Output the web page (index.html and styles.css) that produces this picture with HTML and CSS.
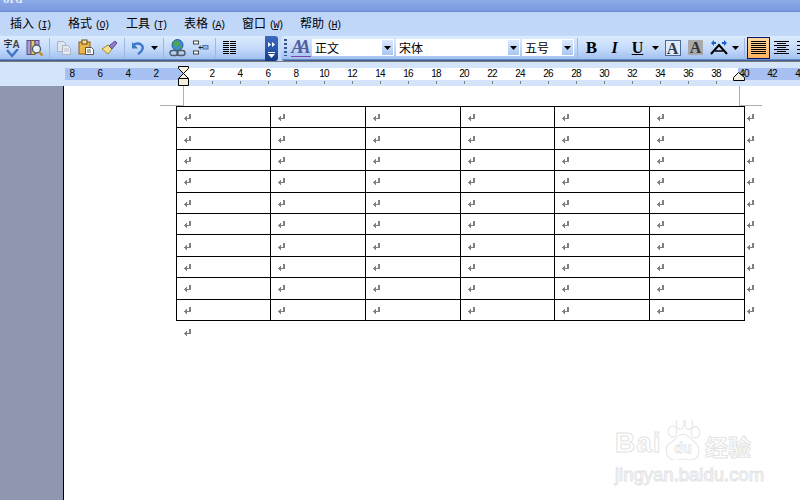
FILE: index.html
```html
<!DOCTYPE html>
<html lang="zh">
<head>
<meta charset="utf-8">
<title>Word</title>
<link rel="stylesheet" href="styles.css">
</head>
<body>
<svg class="defs" width="0" height="0" aria-hidden="true">
  <symbol id="ret" viewBox="0 0 8 8">
    <path d="M5 0h2v5H3V4h2z" fill="#808080"/>
    <path d="M3 2v5h-1v-1h-1v-1h-1v-1h1v-1h1v-1z" fill="#808080"/>
  </symbol>
  <symbol id="drop" viewBox="0 0 7 4"><path d="M0 0h7L3.500 4z" fill="#000"/></symbol>
</svg>

<header class="title"><span class="title-text">ord</span></header>

<nav class="menu">
  <span class="menu-item">插入<span class="key">(<u>I</u>)</span></span>
  <span class="menu-item">格式<span class="key">(<u>O</u>)</span></span>
  <span class="menu-item">工具<span class="key">(<u>T</u>)</span></span>
  <span class="menu-item">表格<span class="key">(<u>A</u>)</span></span>
  <span class="menu-item">窗口<span class="key">(<u>W</u>)</span></span>
  <span class="menu-item">帮助<span class="key">(<u>H</u>)</span></span>
</nav>

<div class="toolbar">
  <div class="band band-left">
    <span class="btn spell"><span class="spell-text"><span class="spell-zi">字</span><span class="spell-a">A</span></span>
      <svg class="spell-check" width="16" height="9" viewBox="0 0 16 9"><path d="M3 1l5 6 6-7" fill="none" stroke="#3f74c8" stroke-width="2.400"/></svg></span>
    <span class="btn"><svg width="17" height="18" viewBox="0 0 17 18">
      <rect x="1" y="1.500" width="4" height="14" fill="#a89bd8" stroke="#5a4f8c"/><rect x="5" y="1.500" width="4" height="14" fill="#e3c878" stroke="#6e5c2e"/><rect x="9" y="1.500" width="4" height="6" fill="#a89bd8" stroke="#5a4f8c"/>
      <circle cx="10.500" cy="10" r="4" fill="#eaf3fb" stroke="#4d5d6c" stroke-width="1.400"/><path d="M13 13l3.500 3.500" stroke="#c98a1c" stroke-width="2.400"/></svg></span>
    <span class="sep"></span>
    <span class="btn"><svg width="16" height="16" viewBox="0 0 16 16">
      <path d="M1.500 1.500h6l2 2v8h-8z" fill="#dfe6ee" stroke="#a7b2c2"/><path d="M6.500 5.500h5l3 3v6h-8z" fill="#e6ebf2" stroke="#a7b2c2"/><path d="M8 9h5M8 11h5" stroke="#b7c1cf"/></svg></span>
    <span class="btn"><svg width="17" height="17" viewBox="0 0 17 17">
      <rect x="1" y="3" width="11" height="12" fill="#e8b84a" stroke="#8b5e16"/><rect x="4" y="1" width="5" height="4" fill="#f4e3a0" stroke="#6c4a12"/>
      <path d="M7.500 8.500h6l2 2v5h-8z" fill="#fff" stroke="#555"/><path d="M9 11h4M9 13h4" stroke="#666"/></svg></span>
    <span class="btn"><svg width="17" height="15" viewBox="0 0 17 15">
      <path d="M1 9l6-4 4 4-4 5z" fill="#f3e08c" stroke="#a78a30"/><path d="M8 6l6-5 2 2-5 6z" fill="#8d7cc8" stroke="#594c94"/></svg></span>
    <span class="sep"></span>
    <span class="btn btn-undo"><svg width="14" height="14" viewBox="0 0 14 14">
      <path d="M3 3.500c6-2.500 9.500 1 8.500 4.500-.7 2.500-2.500 4-4.500 5" fill="none" stroke="#3f78c9" stroke-width="2.500"/><path d="M1 1v6.500h6z" fill="#3f78c9"/></svg></span>
    <span class="dd"><svg width="7" height="4"><use href="#drop"/></svg></span>
    <span class="sep"></span>
    <span class="btn"><svg width="17" height="18" viewBox="0 0 17 18">
      <circle cx="8.500" cy="6" r="5.500" fill="#3b8fd0" stroke="#2a5f96"/><path d="M5 2l4 0 2 3-3 3-3-2zM11 7l2 1-2 2z" fill="#4fa64a"/>
      <rect x="1" y="11.500" width="8" height="5" rx="2.500" fill="none" stroke="#505a68" stroke-width="1.400"/><rect x="8" y="11.500" width="8" height="5" rx="2.500" fill="none" stroke="#505a68" stroke-width="1.400"/></svg></span>
    <span class="btn"><svg width="17" height="15" viewBox="0 0 17 15">
      <rect x="1.500" y="1" width="5" height="3" fill="#fff" stroke="#444"/><rect x="1.500" y="11" width="5" height="3" fill="#fff" stroke="#444"/><rect x="11" y="5.500" width="5" height="3.500" fill="#8db8ea" stroke="#4a76b0"/>
      <path d="M7 7.500h4M9 5.500l-2 2 2 2" fill="none" stroke="#222"/></svg></span>
    <span class="sep"></span>
    <span class="btn"><svg width="13" height="13" viewBox="0 0 13 13">
      <path d="M0 .5h6M0 2.500h6M0 4.500h6M0 6.500h6M0 8.500h6M0 10.500h6M0 12.500h6M7 .5h6M7 2.500h6M7 4.500h6M7 6.500h6M7 8.500h6M7 10.500h6M7 12.500h6" stroke="#000"/></svg></span>
  </div>
  <div class="chevron">
    <svg width="7" height="5" viewBox="0 0 7 5"><path d="M0 0l3 2.500L0 5zM4 0l3 2.500L4 5z" fill="#fff"/></svg>
    <svg width="7" height="6" viewBox="0 0 7 6"><path d="M0 0h7v1H0zM0 2h7L3.500 6z" fill="#fff"/></svg>
  </div>
  <div class="band band-right">
    <span class="grip"></span>
    <span class="style-btn"><span class="style-a">AA</span></span>
    <span class="combo combo-style"><span class="combo-text">正文</span><span class="arrow"><svg width="7" height="4"><use href="#drop"/></svg></span></span>
    <span class="combo combo-font"><span class="combo-text">宋体</span><span class="arrow"><svg width="7" height="4"><use href="#drop"/></svg></span></span>
    <span class="combo combo-size"><span class="combo-text">五号</span><span class="arrow"><svg width="7" height="4"><use href="#drop"/></svg></span></span>
    <span class="sep"></span>
    <span class="btn fmt fmt-b">B</span>
    <span class="btn fmt fmt-i">I</span>
    <span class="btn fmt fmt-u">U</span>
    <span class="dd"><svg width="7" height="4"><use href="#drop"/></svg></span>
    <span class="btn"><span class="fmt-box">A</span></span>
    <span class="btn"><span class="fmt-shade">A</span></span>
    <span class="btn"><svg width="18" height="15" viewBox="0 0 18 15">
      <path d="M1 14L9 5l8 9" fill="none" stroke="#000" stroke-width="2"/><path d="M5 11h8" stroke="#000" stroke-width="1.500"/>
      <path d="M1 3l3-3v2h2v2H4v2z" fill="#1c5fd0"/><path d="M17 3l-3-3v2h-2v2h2v2z" fill="#1c5fd0"/></svg></span>
    <span class="dd dd-narrow"><svg width="7" height="4"><use href="#drop"/></svg></span>
    <span class="sep"></span>
    <span class="btn align active"><svg width="15" height="13" viewBox="0 0 15 13"><path d="M0 .5h15M0 2.500h15M0 4.500h15M0 6.500h15M0 8.500h15M0 10.500h15M0 12.500h15" stroke="#000"/></svg></span>
    <span class="btn align"><svg width="15" height="13" viewBox="0 0 15 13"><path d="M0 .5h15M3 2.500h9M0 4.500h15M3 6.500h9M0 8.500h15M3 10.500h9M0 12.500h15" stroke="#000"/></svg></span>
    <span class="btn align"><svg width="15" height="13" viewBox="0 0 15 13"><path d="M0 .5h15M6 2.500h9M0 4.500h15M6 6.500h9M0 8.500h15M6 10.500h9M0 12.500h15" stroke="#000"/></svg></span>
  </div>
</div>

<div class="ruler">
  <div class="ruler-scale">
    <span class="num">8</span><span class="num">6</span><span class="num">4</span><span class="num">2</span><span class="num"></span>
    <span class="num">2</span><span class="num">4</span><span class="num">6</span><span class="num">8</span><span class="num">10</span>
    <span class="num">12</span><span class="num">14</span><span class="num">16</span><span class="num">18</span><span class="num">20</span>
    <span class="num">22</span><span class="num">24</span><span class="num">26</span><span class="num">28</span><span class="num">30</span>
    <span class="num">32</span><span class="num">34</span><span class="num">36</span><span class="num">38</span><span class="num">40</span>
    <span class="num">42</span><span class="num">44</span>
  </div>
  <div class="ruler-ticks"></div>
  <svg class="marker-left" width="11" height="20" viewBox="0 0 11 20">
    <path d="M.5 .5h10v2L5.500 7.500l5 5v7H.5v-7l5-5-5-5z" fill="#f3efdf" stroke="#000"/><path d="M.5 12.500h10" stroke="#000"/></svg>
  <svg class="marker-right" width="12" height="9" viewBox="0 0 12 9">
    <path d="M.5 8.500v-3l5-5 6 5v3z" fill="#f3efdf" stroke="#000"/></svg>
</div>

<main class="workspace">
  <aside class="side"></aside>
  <section class="doc">
    <span class="crop crop-lv"></span><span class="crop crop-lh"></span>
    <span class="crop crop-rv"></span><span class="crop crop-rh"></span>
    <table class="grid">
      <tbody>
        <tr><td><svg class="ret"><use href="#ret"/></svg></td><td><svg class="ret"><use href="#ret"/></svg></td><td><svg class="ret"><use href="#ret"/></svg></td><td><svg class="ret"><use href="#ret"/></svg></td><td><svg class="ret"><use href="#ret"/></svg></td><td><svg class="ret"><use href="#ret"/></svg></td><td class="end"><svg class="ret"><use href="#ret"/></svg></td></tr>
        <tr><td><svg class="ret"><use href="#ret"/></svg></td><td><svg class="ret"><use href="#ret"/></svg></td><td><svg class="ret"><use href="#ret"/></svg></td><td><svg class="ret"><use href="#ret"/></svg></td><td><svg class="ret"><use href="#ret"/></svg></td><td><svg class="ret"><use href="#ret"/></svg></td><td class="end"><svg class="ret"><use href="#ret"/></svg></td></tr>
        <tr><td><svg class="ret"><use href="#ret"/></svg></td><td><svg class="ret"><use href="#ret"/></svg></td><td><svg class="ret"><use href="#ret"/></svg></td><td><svg class="ret"><use href="#ret"/></svg></td><td><svg class="ret"><use href="#ret"/></svg></td><td><svg class="ret"><use href="#ret"/></svg></td><td class="end"><svg class="ret"><use href="#ret"/></svg></td></tr>
        <tr><td><svg class="ret"><use href="#ret"/></svg></td><td><svg class="ret"><use href="#ret"/></svg></td><td><svg class="ret"><use href="#ret"/></svg></td><td><svg class="ret"><use href="#ret"/></svg></td><td><svg class="ret"><use href="#ret"/></svg></td><td><svg class="ret"><use href="#ret"/></svg></td><td class="end"><svg class="ret"><use href="#ret"/></svg></td></tr>
        <tr><td><svg class="ret"><use href="#ret"/></svg></td><td><svg class="ret"><use href="#ret"/></svg></td><td><svg class="ret"><use href="#ret"/></svg></td><td><svg class="ret"><use href="#ret"/></svg></td><td><svg class="ret"><use href="#ret"/></svg></td><td><svg class="ret"><use href="#ret"/></svg></td><td class="end"><svg class="ret"><use href="#ret"/></svg></td></tr>
        <tr><td><svg class="ret"><use href="#ret"/></svg></td><td><svg class="ret"><use href="#ret"/></svg></td><td><svg class="ret"><use href="#ret"/></svg></td><td><svg class="ret"><use href="#ret"/></svg></td><td><svg class="ret"><use href="#ret"/></svg></td><td><svg class="ret"><use href="#ret"/></svg></td><td class="end"><svg class="ret"><use href="#ret"/></svg></td></tr>
        <tr><td><svg class="ret"><use href="#ret"/></svg></td><td><svg class="ret"><use href="#ret"/></svg></td><td><svg class="ret"><use href="#ret"/></svg></td><td><svg class="ret"><use href="#ret"/></svg></td><td><svg class="ret"><use href="#ret"/></svg></td><td><svg class="ret"><use href="#ret"/></svg></td><td class="end"><svg class="ret"><use href="#ret"/></svg></td></tr>
        <tr><td><svg class="ret"><use href="#ret"/></svg></td><td><svg class="ret"><use href="#ret"/></svg></td><td><svg class="ret"><use href="#ret"/></svg></td><td><svg class="ret"><use href="#ret"/></svg></td><td><svg class="ret"><use href="#ret"/></svg></td><td><svg class="ret"><use href="#ret"/></svg></td><td class="end"><svg class="ret"><use href="#ret"/></svg></td></tr>
        <tr><td><svg class="ret"><use href="#ret"/></svg></td><td><svg class="ret"><use href="#ret"/></svg></td><td><svg class="ret"><use href="#ret"/></svg></td><td><svg class="ret"><use href="#ret"/></svg></td><td><svg class="ret"><use href="#ret"/></svg></td><td><svg class="ret"><use href="#ret"/></svg></td><td class="end"><svg class="ret"><use href="#ret"/></svg></td></tr>
        <tr><td><svg class="ret"><use href="#ret"/></svg></td><td><svg class="ret"><use href="#ret"/></svg></td><td><svg class="ret"><use href="#ret"/></svg></td><td><svg class="ret"><use href="#ret"/></svg></td><td><svg class="ret"><use href="#ret"/></svg></td><td><svg class="ret"><use href="#ret"/></svg></td><td class="end"><svg class="ret"><use href="#ret"/></svg></td></tr>
      </tbody>
    </table>
    <div class="para"><svg class="ret"><use href="#ret"/></svg></div>
    <div class="watermark">
      <div class="wm-top">
        <span class="wm-bai">Bai</span>
        <svg class="wm-paw" width="40" height="40" viewBox="0 0 42 42">
          <g fill="#fff" stroke="#e6e6e6" stroke-width="1.200">
            <ellipse cx="10" cy="12" rx="4.500" ry="6"/><ellipse cx="18" cy="4" rx="4" ry="6"/><ellipse cx="27" cy="4" rx="4" ry="6"/><ellipse cx="34" cy="13" rx="4.500" ry="6"/>
            <path d="M21 15c6 0 9 6 13 9 5 4 6 18-6 18-3 0-5-1-7-1s-5 2-9 1C2 41 1 28 8 24c5-3 7-9 13-9z"/>
          </g>
          <text x="21" y="35" class="wm-du">du</text>
        </svg>
        <span class="wm-cn">经验</span>
      </div>
      <div class="wm-url">jingyan.baidu.com</div>
    </div>
  </section>
</main>
</body>
</html>
```

FILE: styles.css
```css
* { box-sizing: border-box; }

html, body { margin: 0; height: 100%; }

body {
  width: 800px;
  height: 500px;
  overflow: hidden;
  display: flex;
  flex-direction: column;
  background: #fff;
  font-family: "Noto Sans CJK SC", "Liberation Sans", sans-serif;
  color: #000;
}

.defs { display: block; height: 0; }

/* title bar */
.title {
  height: 12px;
  flex: none;
  overflow: hidden;
  padding-left: 3px;
  background: linear-gradient(#8cabe6, #7b98de);
  border-bottom: 1px solid #6d8cd6;
}

.title-text {
  display: block;
  margin-top: -9px;
  font: bold 13px/16px "Liberation Serif", serif;
  color: #dfe8f8;
}

/* menu */
.menu {
  height: 24px;
  flex: none;
  display: flex;
  align-items: center;
  gap: 18px;
  padding-left: 10px;
  background: linear-gradient(#bed5f8, #c3d9f9);
}

.menu-item {
  width: 40px;
  font-size: 12px;
  line-height: 16px;
  white-space: nowrap;
}

.key {
  margin-left: 3px;
  font-family: "Liberation Mono", monospace;
  font-size: 10px;
  letter-spacing: -1.500px;
}

/* toolbar */
.toolbar {
  height: 26px;
  flex: none;
  display: flex;
  background: #c3d9f9;
  border-bottom: 1px solid #7b7b7b;
}

.band {
  display: flex;
  align-items: center;
  height: 25px;
  padding-bottom: 2px;
  background: linear-gradient(#dcebfe 0%, #c4dafa 50%, #a4c2f0 90%, #3f5f9c 97%, #3f5f9c 100%);
}

.band-left { width: 265px; }

.band-right {
  flex: 1;
  min-width: 0;
  margin-left: 3px;
  padding-left: 3px;
  border-radius: 4px 0 0 4px;
  overflow: hidden;
}

.chevron {
  width: 13px;
  height: 25px;
  flex: none;
  display: flex;
  flex-direction: column;
  align-items: center;
  justify-content: space-between;
  padding: 6px 0 3px;
  background: linear-gradient(#3f68c0, #2553a8 60%, #143a85);
  border-radius: 0 3px 3px 0;
}

.btn {
  width: 23px;
  height: 22px;
  flex: none;
  display: flex;
  align-items: center;
  justify-content: center;
}

.btn-undo { width: 21px; }

.sep {
  width: 6px;
  height: 20px;
  flex: none;
  background: linear-gradient(#9fb8e0, #9fb8e0) center / 1px 100% no-repeat;
}

.dd {
  width: 12px;
  height: 22px;
  flex: none;
  display: flex;
  align-items: center;
  justify-content: center;
}

.dd-narrow { width: 11px; }

/* spell button */
.spell {
  flex-direction: column;
  justify-content: flex-start;
  padding-top: 2px;
  overflow: hidden;
}

.spell-text {
  display: flex;
  white-space: nowrap;
}

.spell-zi {
  font-size: 9px;
  line-height: 10px;
}

.spell-a {
  font: bold 10px/11px "Liberation Sans", sans-serif;
  color: #444;
}

.spell-check { margin-top: -1px; }

/* right band */
.grip {
  width: 3px;
  height: 17px;
  flex: none;
  margin-right: 4px;
  background: repeating-linear-gradient(#37588f 0 2px, transparent 2px 4px);
}

.style-btn {
  width: 20px;
  flex: none;
  display: flex;
  justify-content: center;
}

.style-a {
  font: italic bold 18px/18px "Liberation Serif", serif;
  letter-spacing: -5px;
  padding-right: 5px;
  color: #55609f;
  border-bottom: 1px solid #7a45a8;
}

.combo {
  height: 17px;
  flex: none;
  display: flex;
  margin-right: 2px;
  background: #fff;
  border: 1px solid #fff;
}

.combo-style { width: 82px; margin-left: 1px; }
.combo-font { width: 124px; }
.combo-size { width: 52px; margin-right: 0; }

.combo-text {
  flex: 1;
  padding-left: 2px;
  font-size: 12px;
  line-height: 15px;
}

.arrow {
  width: 11px;
  flex: none;
  display: flex;
  align-items: center;
  justify-content: center;
  background: linear-gradient(#dbe9fd, #a9c6f2);
}

.fmt {
  font-family: "Liberation Serif", serif;
  font-weight: bold;
  font-size: 16px;
}

.fmt-b { font-weight: 900; font-size: 17px; }
.fmt-i { font-style: italic; }
.fmt-u { text-decoration: underline; }

.fmt-box {
  width: 16px;
  height: 16px;
  text-align: center;
  font: bold 16px/15px "Liberation Serif", serif;
  color: #2b3b4b;
  border: 1px solid #4d6a96;
  background: #dfeafb;
}

.fmt-shade {
  width: 15px;
  height: 15px;
  text-align: center;
  font: bold 16px/15px "Liberation Serif", serif;
  color: #333;
  background: #a9a9a9;
}

.align.active {
  background: linear-gradient(#ffd9a0, #fdb25e);
  border: 1px solid #00146e;
}

/* ruler */
.ruler {
  height: 24px;
  flex: none;
  position: relative;
  padding-top: 6px;
  overflow: hidden;
  background: #d4e4fb;
}

.ruler-scale {
  height: 12px;
  display: flex;
  padding-left: 58px;
  background: linear-gradient(to right,
    transparent 65px, #a6c0f2 65px, #a6c0f2 183px,
    #fff 183px, #fff 738px, #a6c0f2 738px);
}

.num {
  width: 28px;
  flex: none;
  text-align: center;
  font: 10px/12px "Liberation Sans", sans-serif;
  letter-spacing: -.8px;
}

.ruler-ticks {
  width: 505px;
  height: 3px;
  margin: 1px 0 0 212px;
  background: repeating-linear-gradient(to right, #808080 0 1px, transparent 1px 28px);
}

.marker-left { position: absolute; left: 178px; top: 4px; }
.marker-right { position: absolute; left: 733px; top: 10px; }

/* workspace */
.workspace {
  flex: 1;
  min-height: 0;
  display: flex;
}

.side {
  width: 64px;
  flex: none;
  background: #8e97af;
  border-right: 1px solid #000;
}

.doc {
  flex: 1;
  position: relative;
  padding: 20px 0 0 112px;
  background: #fff;
}

.crop { position: absolute; background: #b0b0b0; }
.crop-lv { left: 119px; top: 0; width: 1px; height: 20px; }
.crop-lh { left: 96px; top: 19px; width: 24px; height: 1px; }
.crop-rv { left: 675px; top: 0; width: 1px; height: 20px; }
.crop-rh { left: 675px; top: 19px; width: 23px; height: 1px; }

.ret { display: block; width: 8px; height: 8px; }

.grid {
  border-collapse: collapse;
  table-layout: fixed;
  width: 588px;
  height: 215px;
}

.grid td {
  width: 95px;
  padding: 2px 0 0 7px;
  border: 1px solid #000;
  vertical-align: middle;
}

.grid td:nth-child(3n+1) { width: 94px; }

.grid td.end {
  width: 20px;
  padding-left: 2px;
  border: 0;
  border-left: 1px solid #000;
}

.para { padding: 8px 0 0 8px; }

/* watermark */
.watermark {
  position: absolute;
  left: 551px;
  top: 334px;
  width: 146px;
  color: #fff;
  -webkit-text-stroke: 1px #e4e4e4;
}

.wm-top {
  display: flex;
  align-items: flex-end;
  height: 40px;
}

.wm-bai {
  width: 48px;
  margin-bottom: 2px;
  font: bold 28px/30px "Liberation Sans", sans-serif;
  letter-spacing: 1px;
}

.wm-paw { flex: none; }

.wm-du {
  font: bold 15px "Liberation Sans", sans-serif;
  text-anchor: middle;
  fill: #fff;
  stroke: #e4e4e4;
  stroke-width: .8;
}

.wm-cn {
  margin-left: 2px;
  font-size: 23px;
  line-height: 28px;
  font-weight: 700;
  white-space: nowrap;
}

.wm-url {
  font: 18.500px/18px "Liberation Sans", sans-serif;
  white-space: nowrap;
  padding-top: 6px;
}
```
